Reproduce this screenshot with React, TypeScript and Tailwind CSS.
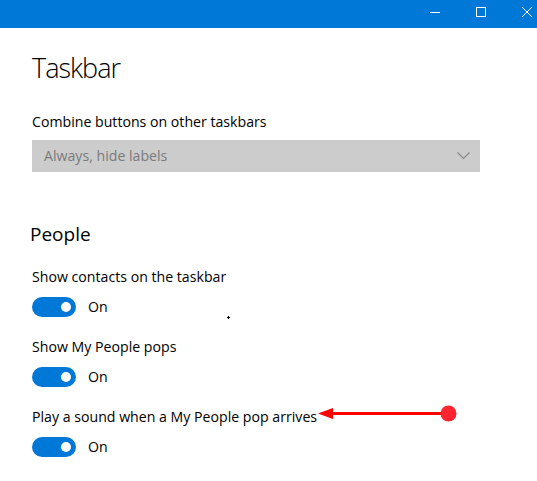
const font = { fontFamily: '"Open Sans", "Noto Sans", sans-serif' }

function Toggle({ label }: { label: string }) {
  return (
    <div className="flex flex-col">
      <div className="text-[14.15px] leading-[20px] text-black">{label}</div>
      <div className="mt-[10px] flex items-center gap-[12px]">
        <div className="flex h-[20px] w-[44px] items-center justify-end rounded-full bg-[#0078d7] pr-[5px]">
          <div className="h-[10px] w-[10px] rounded-full bg-white" />
        </div>
        <span className="text-[14.15px] leading-[20px] text-black">On</span>
      </div>
    </div>
  )
}

export default function App() {
  return (
    <div style={font} className="relative h-[481px] w-[537px] overflow-hidden bg-white">
      <div className="flex h-[28px] items-start bg-[#0078d7] text-white">
        <div className="flex-1" />
        <div className="mt-[12px] h-px w-[10px] bg-white" />
        <div className="ml-[36px] mt-[7px] h-[10px] w-[10px] border border-white" />
        <svg className="ml-[36px] mr-[5px] mt-[7px] h-[10px] w-[10px]" viewBox="0 0 10 10" fill="none" stroke="white" strokeWidth="1">
          <path d="M0 0 L10 10 M10 0 L0 10" />
        </svg>
      </div>

      <div className="pl-[32px]">
        <h1 className="mt-[20px] text-[27px] leading-[40px] font-light tracking-[-1px] text-black">Taskbar</h1>
        <div className="mt-[24px] text-[14.15px] leading-[20px] text-black">Combine buttons on other taskbars</div>
        <div className="mt-[8px] flex h-[32px] w-[448px] items-center justify-between bg-[#cccccc] pl-[12px] pr-[10px]">
          <span className="text-[14.15px] text-[#7a7a7a]">Always, hide labels</span>
          <svg className="h-[8px] w-[13px]" viewBox="0 0 13 8" fill="none" stroke="#8a8a8a" strokeWidth="1.2">
            <path d="M0.5 0.5 L6.5 6.5 L12.5 0.5" />
          </svg>
        </div>
        <h2 className="-ml-[2px] mt-[47px] text-[19px] leading-[30px] font-normal text-black">People</h2>
        <div className="mt-[18px] flex flex-col gap-[20px]">
          <Toggle label="Show contacts on the taskbar" />
          <Toggle label="Show My People pops" />
          <Toggle label="Play a sound when a My People pop arrives" />
        </div>
      </div>

      <svg className="absolute left-[227px] top-[316px]" width="3" height="3" viewBox="0 0 3 3">
        <path d="M1 0 H2 V1 H3 V2 H2 V3 H1 V2 H0 V1 H1 Z" fill="#000000" />
      </svg>
      <svg className="absolute left-[315px] top-[400px]" width="145" height="26" viewBox="0 0 145 26">
        <path d="M15 13.5 H130" stroke="#ff0000" strokeWidth="3" />
        <path d="M3 13.5 L18 8 V19 Z" fill="#ff0000" />
        <circle cx="133.5" cy="13.5" r="8" fill="#ff2530" />
      </svg>
    </div>
  )
}
